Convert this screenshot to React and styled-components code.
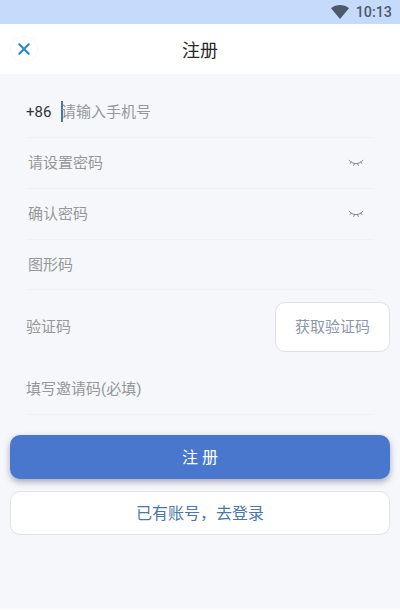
import React from 'react'
import styled, { createGlobalStyle } from 'styled-components'

const GlobalStyle = createGlobalStyle`
  * {
    box-sizing: border-box;
  }

  body {
    margin: 0;
    background: #fff;
    font-family: Roboto, 'Noto Sans CJK SC', sans-serif;
  }

  button,
  input {
    font-family: inherit;
  }
`

function EyeClosedIcon() {
  return (
    <svg width="16" height="8" viewBox="0 0 16 8" fill="none">
      <path
        d="M1 1.2C4.2 5.8 11.8 5.8 15 1.2M3.3 3.2L1.9 4.5M6.4 4.7L5.7 6.5M9.6 4.7L10.3 6.5M12.7 3.2L14.1 4.5"
        stroke="#85888d"
        strokeWidth="1"
        strokeLinecap="round"
      />
    </svg>
  )
}

function PasswordRow({ placeholder }) {
  return (
    <Row $indent>
      <Input type="password" placeholder={placeholder} />
      <EyeButton aria-label={placeholder}>
        <EyeClosedIcon />
      </EyeButton>
    </Row>
  )
}

function App() {
  return (
    <Page>
      <GlobalStyle />
      <StatusBar>
        <svg width="18" height="14" viewBox="0 0 18 14">
          <path d="M0 3.2C5 -1 13 -1 18 3.2L9 14Z" fill="#4e5a6c" />
        </svg>
        <Time>10:13</Time>
      </StatusBar>

      <Header>
        <CloseButton aria-label="close">
          <svg width="12" height="12" viewBox="0 0 12 12">
            <path
              d="M1.3 1.3L10.7 10.7M10.7 1.3L1.3 10.7"
              stroke="#2d8bbd"
              strokeWidth="2.2"
              strokeLinecap="round"
            />
          </svg>
        </CloseButton>
        <Title>注册</Title>
      </Header>

      <Form>
        <Row>
          <Prefix>+86</Prefix>
          <Caret />
          <Input placeholder="请输入手机号" />
        </Row>
        <PasswordRow placeholder="请设置密码" />
        <PasswordRow placeholder="确认密码" />
        <Row $indent height="50px">
          <Input placeholder="图形码" />
        </Row>
        <CodeRow>
          <Input placeholder="验证码" />
          <CodeButton>获取验证码</CodeButton>
        </CodeRow>
        <Row>
          <Input placeholder="填写邀请码(必填)" />
        </Row>
      </Form>

      <Actions>
        <PrimaryButton>注 册</PrimaryButton>
        <SecondaryButton>已有账号，去登录</SecondaryButton>
      </Actions>
    </Page>
  )
}

export default App

const Page = styled.main`
  display: flex;
  flex-direction: column;
  height: 609px;
  background: #f5f7fb;
`

const StatusBar = styled.div`
  display: flex;
  align-items: center;
  justify-content: flex-end;
  gap: 7px;
  height: 24px;
  padding: 0 8px 1px 0;
  background: #c6dafc;
`

const Time = styled.span`
  padding-top: 1px;
  color: #4e5a6c;
  font-size: 14.3px;
  font-weight: 500;
  line-height: 24px;
`

const Header = styled.header`
  display: grid;
  grid-template-columns: 48px 1fr 48px;
  align-items: center;
  height: 50px;
  background: #fff;
`

const CloseButton = styled.button`
  display: flex;
  align-items: center;
  justify-content: center;
  width: 28px;
  height: 28px;
  margin-left: 10px;
  padding: 0;
  border: 1px solid #f7f9fb;
  border-radius: 50%;
  background: #fff;
`

const Title = styled.h1`
  margin: 4px 0 0;
  color: #292929;
  font-size: 18px;
  font-weight: 400;
  line-height: 26px;
  text-align: center;
`

const Form = styled.section`
  padding: 13px 26px 0;
`

const Row = styled.div`
  display: flex;
  align-items: center;
  height: ${props => props.height || '51px'};
  padding-left: ${props => (props.$indent ? '2px' : '0')};
  border-bottom: 1px solid #eff1f5;
`

const CodeRow = styled.div`
  display: flex;
  align-items: center;
  height: 74px;
  margin-right: -16px;
`

const Prefix = styled.span`
  width: 35px;
  color: #303338;
  font-size: 15px;
`

const Caret = styled.span`
  width: 2px;
  height: 21px;
  margin: 0 -2px 2px 0;
  background: #4775ad;
`

const Input = styled.input`
  flex: 1;
  min-width: 0;
  height: 30px;
  padding: 0;
  border: 0;
  outline: 0;
  background: transparent;
  font-size: 15px;

  &::placeholder {
    color: #959799;
    opacity: 1;
  }
`

const EyeButton = styled.button`
  display: flex;
  margin-right: 10px;
  padding: 0;
  border: 0;
  background: transparent;
`

const CodeButton = styled.button`
  width: 115px;
  height: 50px;
  padding: 0 0 3px;
  border: 1px solid #dfe1e7;
  border-radius: 10px;
  background: #fff;
  color: #8d97a8;
  font-size: 15px;
`

const Actions = styled.div`
  display: flex;
  flex-direction: column;
  gap: 12px;
  padding: 20px 10px 0;
`

const PrimaryButton = styled.button`
  height: 44px;
  padding: 0 0 3px;
  border: 0;
  border-radius: 10px;
  background: #4977ce;
  box-shadow: 0 3px 6px rgba(60, 65, 90, 0.42);
  color: #fff;
  font-size: 16px;
`

const SecondaryButton = styled(PrimaryButton)`
  border: 1px solid #dfe2e7;
  background: #fff;
  box-shadow: none;
  color: #4b76ac;
`
